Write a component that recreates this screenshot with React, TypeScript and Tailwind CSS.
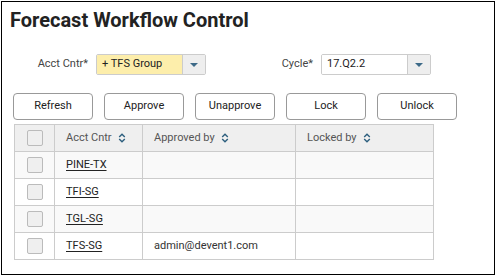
const rows = [
  { code: 'PINE-TX', approved: '', locked: '' },
  { code: 'TFI-SG', approved: '', locked: '' },
  { code: 'TGL-SG', approved: '', locked: '' },
  { code: 'TFS-SG', approved: 'admin@devent1.com', locked: '' },
];

function SortIcon() {
  return (
    <svg width="8" height="10" viewBox="0 0 8 10" className="ml-[6px] shrink-0">
      <path d="M1.2 4 L4 1.3 L6.8 4" fill="none" stroke="#2d5f7e" strokeWidth="1.4" />
      <path d="M1.2 6 L4 8.7 L6.8 6" fill="none" stroke="#2d5f7e" strokeWidth="1.4" />
    </svg>
  );
}

function Select({ value, yellow }: { value: string; yellow?: boolean }) {
  return (
    <div className="flex h-[21px] w-[110px] rounded-[2px] border border-[#cccccc] overflow-hidden">
      <div
        className={`flex flex-1 items-center px-[5px] text-[#222] ${yellow ? 'bg-[#fdeeab]' : 'bg-white'}`}
      >
        {value}
      </div>
      <div className="flex w-[23px] items-center justify-center border-l border-[#cccccc] bg-[#eeeeee]">
        <svg width="8" height="4" viewBox="0 0 8 4">
          <path d="M0 0 L8 0 L4 4 Z" fill="#3d6a88" />
        </svg>
      </div>
    </div>
  );
}

function Checkbox() {
  return <div className="h-[16px] w-[16px] rounded-[2px] border border-[#bbbbbb] bg-[#efefef]" />;
}

const cell = 'flex h-[27px] items-center border-r border-b border-[#cccccc] px-[11px]';

export default function App() {
  return (
    <div
      className="ml-px mt-px h-[274px] w-[494px] border border-black bg-white text-[11px] text-[#333]"
      style={{ fontFamily: 'Roboto, "Liberation Sans", sans-serif' }}
    >
      <h1 className="pl-[8px] pt-[6px] text-[20px] font-bold leading-[24px] text-[#222]">
        Forecast Workflow Control
      </h1>

      <div className="mt-[22px] flex items-center">
        <span className="w-[86px] text-right text-[#444]">Acct Cntr*</span>
        <div className="ml-[8px]">
          <Select value="+ TFS Group" yellow />
        </div>
        <span className="w-[107px] text-right text-[#444]">Cycle*</span>
        <div className="ml-[8px]">
          <Select value="17.Q2.2" />
        </div>
      </div>

      <div className="mt-[18px] flex gap-[11px] pl-[11px]">
        {['Refresh', 'Approve', 'Unapprove', 'Lock', 'Unlock'].map((b) => (
          <button
            key={b}
            className="h-[27px] w-[80px] rounded-[4px] border border-[#999999] bg-white text-[#222]"
          >
            {b}
          </button>
        ))}
      </div>

      <div className="ml-[12px] mt-[4px] w-[420px] border-l border-t border-[#cccccc]">
        <div className="grid grid-cols-[40px_88px_153px_138px] bg-[#efefef] text-[#555]">
          <div className={`${cell} justify-center px-0`}>
            <Checkbox />
          </div>
          <div className={cell}>
            Acct Cntr
            <SortIcon />
          </div>
          <div className={cell}>
            Approved by
            <SortIcon />
          </div>
          <div className={cell}>
            Locked by
            <SortIcon />
          </div>
        </div>
        {rows.map((r, i) => (
          <div
            key={r.code}
            className={`grid grid-cols-[40px_88px_153px_138px] ${i % 2 === 0 ? 'bg-[#f9f9f9]' : 'bg-white'}`}
          >
            <div className={`${cell} justify-center px-0`}>
              <Checkbox />
            </div>
            <div className={cell}>
              <a className="text-[#222] underline underline-offset-2">{r.code}</a>
            </div>
            <div className={`${cell} text-[#333]`}>{r.approved}</div>
            <div className={cell}>{r.locked}</div>
          </div>
        ))}
      </div>
    </div>
  );
}
